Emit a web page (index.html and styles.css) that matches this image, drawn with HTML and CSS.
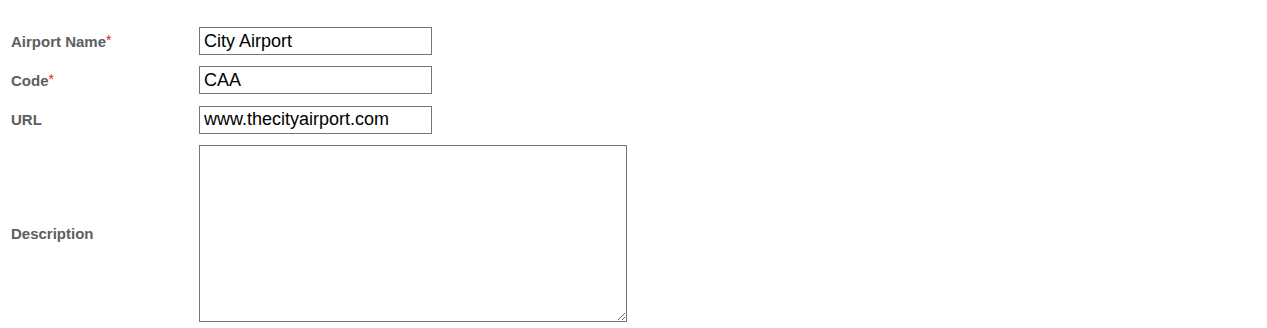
FILE: index.html
```html
<!DOCTYPE html>
<html>
<head>
<meta charset="utf-8">
<link rel="stylesheet" href="styles.css">
</head>
<body>
<form class="form">
  <div class="row">
    <label class="label">Airport Name<span class="req">*</span></label>
    <input class="field" type="text" value="City Airport">
  </div>
  <div class="row">
    <label class="label">Code<span class="req">*</span></label>
    <input class="field" type="text" value="CAA">
  </div>
  <div class="row">
    <label class="label">URL</label>
    <input class="field" type="text" value="www.thecityairport.com">
  </div>
  <div class="row">
    <label class="label">Description</label>
    <textarea class="area"></textarea>
  </div>
</form>
</body>
</html>
```
FILE: styles.css
```css
html, body {
  margin: 0;
  padding: 0;
  background: #fff;
}
.form {
  display: grid;
  grid-template-rows: 28px 28px 28px 177px;
  row-gap: 11.34px;
  padding: 27px 0 0 11px;
  font-family: "Liberation Sans", Arial, sans-serif;
}
.row {
  display: flex;
  align-items: center;
}
.label {
  width: 188px;
  font-size: 15px;
  font-weight: bold;
  color: #5e5e5e;
}
.req {
  color: #e0201f;
  font-size: 14px;
  vertical-align: 2px;
  font-weight: normal;
}
.field {
  box-sizing: border-box;
  width: 233px;
  height: 28px;
  margin: 0;
  padding: 0 4px;
  border: 1px solid #767676;
  border-radius: 0;
  font-family: "Liberation Sans", Arial, sans-serif;
  font-size: 18px;
  color: #000;
  outline: none;
}
.area {
  box-sizing: border-box;
  width: 428px;
  height: 177px;
  margin: 0;
  padding: 2px;
  border: 1px solid #767676;
  border-radius: 0;
  font-family: "Liberation Sans", Arial, sans-serif;
  font-size: 14px;
}
```
